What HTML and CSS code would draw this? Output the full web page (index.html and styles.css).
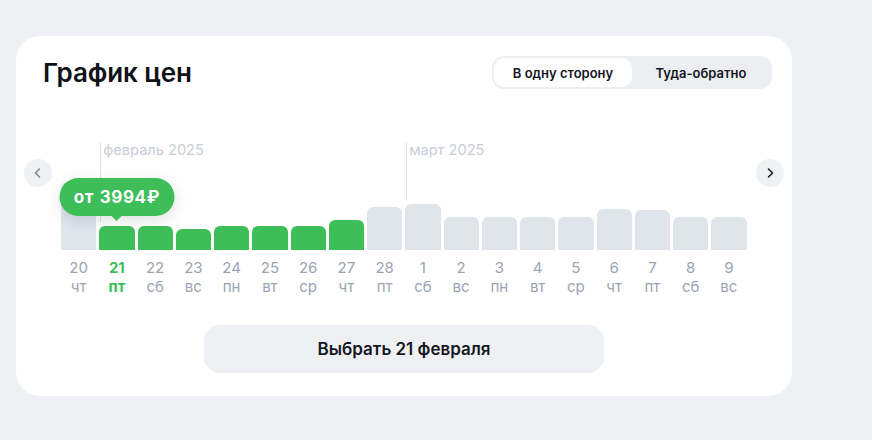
FILE: index.html
```html
<!DOCTYPE html>
<html lang="ru">
<head>
    <meta charset="UTF-8">
    <meta name="viewport" content="width=device-width, initial-scale=1.0">
    <title>График цен</title>
    <link rel="stylesheet" href="styles.css">
</head>
<body>

    <div class="card">
        <div class="card-header">
            <h2 class="title">График цен</h2>
            <div class="toggle">
                <button class="toggle-item active">В одну сторону</button>
                <button class="toggle-item">Туда-обратно</button>
            </div>
        </div>

        <div class="chart-row">
            <button class="nav nav-prev" aria-label="Назад">
                <svg width="14" height="14" viewBox="0 0 14 14"><path d="M8.5 3 L4.5 7 L8.5 11" fill="none" stroke="#7b8190" stroke-width="1.5" stroke-linecap="round" stroke-linejoin="round"/></svg>
            </button>

            <div class="chart" id="chart"></div>

            <button class="nav nav-next" aria-label="Вперёд">
                <svg width="14" height="14" viewBox="0 0 14 14"><path d="M5.5 3 L9.5 7 L5.5 11" fill="none" stroke="#1b1f27" stroke-width="1.6" stroke-linecap="round" stroke-linejoin="round"/></svg>
            </button>
        </div>

        <div class="actions">
            <button class="select-btn">Выбрать 21 февраля</button>
        </div>
    </div>

    <script>
        // день, день недели, высота столбика, цена есть / выбран, метка месяца
        const days = [
            { d: 20, w: "чт", h: 68 },
            { d: 21, w: "пт", h: 24, price: true, selected: true, month: "февраль 2025" },
            { d: 22, w: "сб", h: 24, price: true },
            { d: 23, w: "вс", h: 21, price: true },
            { d: 24, w: "пн", h: 24, price: true },
            { d: 25, w: "вт", h: 24, price: true },
            { d: 26, w: "ср", h: 24, price: true },
            { d: 27, w: "чт", h: 30, price: true },
            { d: 28, w: "пт", h: 43 },
            { d: 1, w: "сб", h: 46, month: "март 2025" },
            { d: 2, w: "вс", h: 33 },
            { d: 3, w: "пн", h: 33 },
            { d: 4, w: "вт", h: 33 },
            { d: 5, w: "ср", h: 33 },
            { d: 6, w: "чт", h: 41 },
            { d: 7, w: "пт", h: 40 },
            { d: 8, w: "сб", h: 33 },
            { d: 9, w: "вс", h: 33 }
        ];

        const chart = document.getElementById("chart");

        days.forEach(function (day) {
            const col = document.createElement("div");
            col.className = "day" + (day.selected ? " selected" : "");

            let marker = '<div class="marker"></div>';
            if (day.month) {
                marker = '<div class="marker month"><span class="month-label">' + day.month + '</span></div>';
            }

            let tip = "";
            if (day.selected) {
                tip = '<div class="tooltip">от 3994₽</div>';
            }

            col.innerHTML =
                '<div class="bar-area">' + marker +
                    '<div class="bar' + (day.price ? ' green' : '') + '" style="height:' + day.h + 'px">' + tip + '</div>' +
                '</div>' +
                '<span class="num">' + day.d + '</span>' +
                '<span class="weekday">' + day.w + '</span>';

            chart.appendChild(col);
        });
    </script>

</body>
</html>
```

FILE: styles.css
```css
body {
    margin: 0;
    padding: 36px 0 0 16px;
    background: #eff0f4;
    font-family: 'Inter', 'Noto Sans', sans-serif;
    color: #14171f;
}

.card {
    width: 776px;
    height: 360px;
    box-sizing: border-box;
    background: #fff;
    border-radius: 24px;
    padding: 20px 8px 0 8px;
}

/* Шапка */
.card-header {
    display: flex;
    justify-content: space-between;
    align-items: center;
    padding: 0 12px 0 19px;
}

.title {
    margin: 0;
    font-size: 26px;
    font-weight: 600;
    line-height: 33px;
    letter-spacing: -0.1px;
    color: #0f1218;
}

.toggle {
    display: flex;
    background: #eceef2;
    border-radius: 12px;
    padding: 2px;
    height: 33px;
    box-sizing: border-box;
}

.toggle-item {
    width: 138px;
    box-sizing: border-box;
    border: none;
    background: transparent;
    font-family: inherit;
    font-size: 13px;
    font-weight: 600;
    color: #14171f;
    padding: 0;
    white-space: nowrap;
    border-radius: 10px;
    cursor: pointer;
}

.toggle-item.active {
    background: #fff;
}

/* График */
.chart-row {
    display: flex;
    align-items: flex-start;
    margin-top: 54px;
}

.nav {
    width: 28px;
    height: 28px;
    border: none;
    border-radius: 50%;
    background: #eff1f4;
    display: flex;
    align-items: center;
    justify-content: center;
    padding: 0;
    margin-top: 16px;
    cursor: pointer;
}

.nav-next {
    margin-left: auto;
}

.chart {
    display: flex;
    gap: 3px;
    margin-left: 9px;
}

.day {
    width: 35.25px;
    display: flex;
    flex-direction: column;
    align-items: center;
}

.bar-area {
    width: 100%;
    height: 107px;
    display: flex;
    flex-direction: column;
}

.marker {
    flex: 1;
}

.marker.month {
    border-left: 1px solid #dde1e7;
    margin-left: 1px;
    margin-bottom: 4px;
}

.month-label {
    display: block;
    padding-left: 2px;
    white-space: nowrap;
    font-size: 14.6px;
    line-height: 14px;
    color: #c8cdd6;
}

.bar {
    position: relative;
    width: 100%;
    flex-shrink: 0;
    background: #e0e4eb;
    border-radius: 6px 6px 0 0;
}

.bar.green {
    background: #3dbe59;
}

.tooltip {
    position: absolute;
    bottom: calc(100% + 10px);
    left: 50%;
    transform: translateX(-50%);
    width: 115px;
    height: 38px;
    box-sizing: border-box;
    background: #3dbe59;
    border-radius: 19px;
    color: #fff;
    font-size: 17px;
    font-weight: 700;
    line-height: 38px;
    letter-spacing: 0.6px;
    word-spacing: 1px;
    text-align: center;
    white-space: nowrap;
    box-shadow: 0 4px 14px rgba(30, 40, 60, 0.14);
    z-index: 2;
}

.tooltip::after {
    content: "";
    position: absolute;
    left: 50%;
    bottom: -5px;
    margin-left: -6px;
    border-left: 6px solid transparent;
    border-right: 6px solid transparent;
    border-top: 6px solid #3dbe59;
}

.num,
.weekday {
    font-size: 15px;
    line-height: 19px;
    color: #9ba3b3;
}

.num {
    margin-top: 8px;
}

.day.selected .num,
.day.selected .weekday {
    color: #3dbe59;
    font-weight: 700;
}

/* Кнопка выбора */
.actions {
    display: flex;
    justify-content: center;
    margin-top: 29px;
}

.select-btn {
    width: 400px;
    height: 48px;
    border: none;
    border-radius: 16px;
    background: #eff0f3;
    font-family: inherit;
    font-size: 17px;
    font-weight: 600;
    color: #14171f;
    cursor: pointer;
}
```
